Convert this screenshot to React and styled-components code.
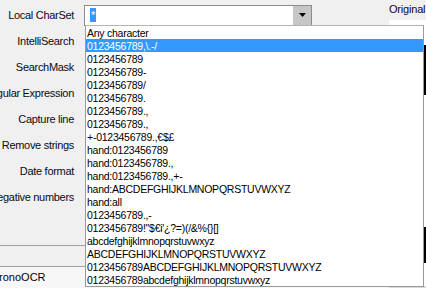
import React from "react";
import styled, { createGlobalStyle } from "styled-components";

const GlobalStyle = createGlobalStyle`
  html, body {
    margin: 0;
    padding: 0;
    background: #f0f0f0;
  }
`;

const Page = styled.div`
  position: relative;
  width: 426px;
  height: 288px;
  overflow: hidden;
  display: flex;
  flex-direction: row;
  background: #f0f0f0;
  font-family: "Liberation Sans", Arial, sans-serif;
  color: #000;
`;

const FormArea = styled.div`
  width: 389px;
  flex-shrink: 0;
  display: flex;
  flex-direction: column;
  padding-top: 2px;
`;

const Row = styled.div`
  display: grid;
  grid-template-columns: 75px 1fr;
  height: 26px;
  align-items: center;
`;

const Label = styled.div`
  display: flex;
  justify-content: flex-end;
  white-space: nowrap;
  font-size: 11px;
  letter-spacing: -0.3px;
  color: #0a0a14;
  padding-right: 1px;
`;

const Field = styled.div`
  padding-left: 9px;
  display: flex;
`;

const Combo = styled.div`
  box-sizing: border-box;
  width: 228px;
  height: 21px;
  border: 1px solid #8c8c8c;
  background: #fff;
  display: flex;
  align-items: center;
  justify-content: space-between;
  padding-left: 5px;
`;

const Selected = styled.span`
  background: #3399ff;
  color: #fff;
  font-size: 11px;
  line-height: 14px;
  padding: 0 1px;
`;

const DropButton = styled.div`
  width: 18px;
  height: 19px;
  background: #c6c6c6;
  display: flex;
  align-items: center;
  justify-content: center;
`;

const BottomBand = styled.div`
  margin-top: 35px;
  height: 20px;
  border-top: 1px solid #a0a0a0;
  border-bottom: 1px solid #a0a0a0;
`;

const Status = styled.div`
  flex: 1;
  background: #f7f7f7;
  display: flex;
  align-items: center;
  font-size: 11px;
  white-space: nowrap;
  padding-bottom: 2px;

  span {
    margin-left: -15px;
  }
`;

const RightArea = styled.div`
  flex: 1;
  display: flex;
  flex-direction: column;
`;

const RightTitle = styled.div`
  height: 20px;
  font-size: 11px;
  letter-spacing: -0.2px;
  padding-top: 3px;
  box-sizing: border-box;
  color: #0a0a14;
  white-space: nowrap;
`;

const WhiteBox = styled.div`
  flex: 1;
  background: #fff;
  display: flex;
  flex-direction: column;
  align-items: flex-end;
  padding-top: 25px;
  border-bottom: 2px solid #d8d8d8;
`;

const BlackBar = styled.div`
  width: 2px;
  height: ${(p) => p.$h}px;
  margin-top: ${(p) => p.$gap}px;
  background: #000;
`;

const ListBox = styled.ul`
  position: absolute;
  left: 85px;
  top: 25px;
  width: 339px;
  box-sizing: border-box;
  margin: 0;
  padding: 0;
  list-style: none;
  background: #fff;
  border: 1px solid #9a9a9a;
  border-top-color: #b4b4b4;
`;

const Item = styled.li`
  height: 13px;
  line-height: 14px;
  font-size: 10.5px;
  letter-spacing: -0.25px;
  padding-left: 1px;
  white-space: nowrap;
  overflow: hidden;
  background: ${(p) => (p.$active ? "#3399ff" : "transparent")};
  color: ${(p) => (p.$active ? "#fff" : "#000")};
`;

const labels = [
  "Local CharSet",
  "IntelliSearch",
  "SearchMask",
  "Regular Expression",
  "Capture line",
  "Remove strings",
  "Date format",
  "Negative numbers",
];

const charsets = [
  "Any character",
  "0123456789,\\.-/",
  "0123456789",
  "0123456789-",
  "0123456789/",
  "0123456789.",
  "0123456789.,",
  "0123456789.,",
  "+-0123456789.,€$£",
  "hand:0123456789",
  "hand:0123456789.,",
  "hand:0123456789.,+-",
  "hand:ABCDEFGHIJKLMNOPQRSTUVWXYZ",
  "hand:all",
  "0123456789.,-",
  "0123456789!\"$€i'¿?=)(/&%{}[]",
  "abcdefghijklmnopqrstuvwxyz",
  "ABCDEFGHIJKLMNOPQRSTUVWXYZ",
  "0123456789ABCDEFGHIJKLMNOPQRSTUVWXYZ",
  "0123456789abcdefghijklmnopqrstuvwxyz",
];

const App = () => {
  return (
    <>
      <GlobalStyle />
      <Page>
        <FormArea>
          {labels.map((label, i) => (
            <Row key={label}>
              <Label>{label}</Label>
              <Field>
                {i === 0 && (
                  <Combo>
                    <Selected>*</Selected>
                    <DropButton>
                      <svg width="7" height="4" viewBox="0 0 7 4">
                        <path d="M0 0 H7 L3.5 4 Z" fill="#000" />
                      </svg>
                    </DropButton>
                  </Combo>
                )}
              </Field>
            </Row>
          ))}
          <BottomBand />
          <Status>
            <span>ChronoOCR</span>
          </Status>
        </FormArea>
        <RightArea>
          <RightTitle>Original</RightTitle>
          <WhiteBox>
            <BlackBar $h={50} $gap={0} />
            <BlackBar $h={36} $gap={132} />
          </WhiteBox>
        </RightArea>
        <ListBox>
          {charsets.map((c, i) => (
            <Item key={i} $active={i === 1}>
              {c}
            </Item>
          ))}
        </ListBox>
      </Page>
    </>
  );
};

export default App;
